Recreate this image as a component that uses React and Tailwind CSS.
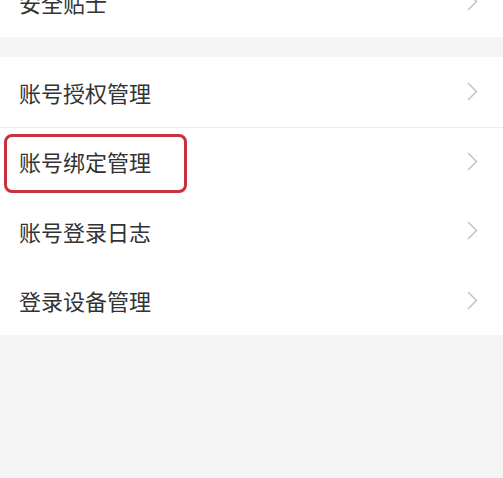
const rows = ["账号授权管理", "账号绑定管理", "账号登录日志", "登录设备管理"];

function Chevron() {
  return (
    <svg width="11" height="19" viewBox="0 0 11 19" fill="none" className="shrink-0">
      <polyline points="1.5,1.5 9.5,9.5 1.5,17.5" stroke="#c4c4c4" strokeWidth="1.6" strokeLinecap="round" strokeLinejoin="round" />
    </svg>
  );
}

function Row({ label, highlight, divider }) {
  return (
    <div className="relative flex h-[69.5px] items-center justify-between bg-white pl-[19px] pr-[25px]">
      {divider && <div className="absolute left-0 right-0 top-0 h-px bg-[#ededed]" />}
      {highlight && (
        <div className="absolute left-[4px] top-[7px] h-[59px] w-[183px] rounded-[8px] border-[3px] border-[#c8313f]" />
      )}
      <span className="text-[22px] leading-none text-[#333]">{label}</span>
      <Chevron />
    </div>
  );
}

export default function App() {
  return (
    <div
      className="h-[478px] w-[503px] overflow-hidden bg-[#f5f5f6]"
      style={{ fontFamily: '"Noto Sans CJK SC", "Noto Sans", sans-serif' }}
    >
      {/* 顶部被截断的一行 */}
      <div className="-mt-[33px]">
        <Row label="安全贴士" />
      </div>

      {/* 账号相关 */}
      <div className="mt-[20.5px]">
        {rows.map((r, i) => (
          <Row key={r} label={r} highlight={i === 1} divider={i === 1} />
        ))}
      </div>
    </div>
  );
}
